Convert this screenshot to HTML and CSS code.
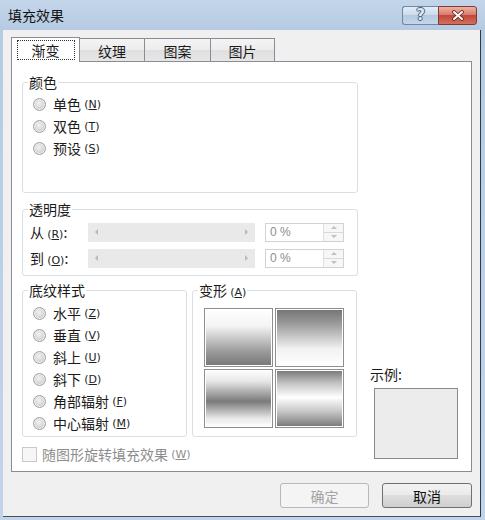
FILE: index.html
```html
<!DOCTYPE html>
<html lang="zh-CN">

<head>
    <meta charset="UTF-8">
    <meta name="viewport" content="width=device-width, initial-scale=1.0">
    <title>填充效果</title>
    <link rel="stylesheet" href="styles.css">
</head>

<body>
    <div class="window">
        <div class="titlebar">
            <span class="title">填充效果</span>
            <div class="caption-btns">
                <span class="cap help">?</span>
                <span class="cap close">
                    <svg width="14" height="11" viewBox="0 0 14 11">
                        <path d="M3 2 L11 9 M11 2 L3 9" stroke="#5a2620" stroke-width="3.6" stroke-linecap="round"/>
                        <path d="M3 2 L11 9 M11 2 L3 9" stroke="#fff" stroke-width="2" stroke-linecap="round"/>
                    </svg>
                </span>
            </div>
        </div>

        <div class="client">
            <div class="tabs">
                <div class="tab active"><span class="focus">渐变</span></div>
                <div class="tab t2">纹理</div>
                <div class="tab t3">图案</div>
                <div class="tab t4">图片</div>
            </div>

            <div class="panel">
                <fieldset class="group color">
                    <legend>颜色</legend>
                    <div class="rlist">
                        <div class="radio"><span class="dot"></span>单色 <span class="key">(<u>N</u>)</span></div>
                        <div class="radio"><span class="dot"></span>双色 <span class="key">(<u>T</u>)</span></div>
                        <div class="radio"><span class="dot"></span>预设 <span class="key">(<u>S</u>)</span></div>
                    </div>
                </fieldset>

                <fieldset class="group alpha">
                    <legend>透明度</legend>
                    <div class="trow">
                        <span class="tlabel">从 <span class="key">(<u>R</u>)</span>:</span>
                        <div class="slider"><i class="arr left"></i><i class="arr right"></i></div>
                        <div class="spin">
                            <span class="val">0 %</span>
                            <span class="spin-btns"><i class="up"></i><i class="down"></i></span>
                        </div>
                    </div>
                    <div class="trow">
                        <span class="tlabel">到 <span class="key">(<u>O</u>)</span>:</span>
                        <div class="slider"><i class="arr left"></i><i class="arr right"></i></div>
                        <div class="spin">
                            <span class="val">0 %</span>
                            <span class="spin-btns"><i class="up"></i><i class="down"></i></span>
                        </div>
                    </div>
                </fieldset>

                <div class="lower">
                    <div class="lower-left">
                        <div class="groups">
                            <fieldset class="group shading">
                                <legend>底纹样式</legend>
                                <div class="rlist">
                                    <div class="radio"><span class="dot"></span>水平 <span class="key">(<u>Z</u>)</span></div>
                                    <div class="radio"><span class="dot"></span>垂直 <span class="key">(<u>V</u>)</span></div>
                                    <div class="radio"><span class="dot"></span>斜上 <span class="key">(<u>U</u>)</span></div>
                                    <div class="radio"><span class="dot"></span>斜下 <span class="key">(<u>D</u>)</span></div>
                                    <div class="radio"><span class="dot"></span>角部辐射 <span class="key">(<u>F</u>)</span></div>
                                    <div class="radio"><span class="dot"></span>中心辐射 <span class="key">(<u>M</u>)</span></div>
                                </div>
                            </fieldset>
                            <fieldset class="group variants">
                                <legend>变形 <span class="key">(<u>A</u>)</span></legend>
                                <div class="vgrid">
                                    <div class="cell v1"></div>
                                    <div class="cell v2"></div>
                                    <div class="cell v3"></div>
                                    <div class="cell v4"></div>
                                </div>
                            </fieldset>
                        </div>
                        <div class="check"><span class="box"></span>随图形旋转填充效果 <span class="key">(<u>W</u>)</span></div>
                    </div>
                    <div class="sample">
                        <div class="sample-label">示例:</div>
                        <div class="sample-box"></div>
                    </div>
                </div>
            </div>

            <div class="buttons">
                <button disabled>确定</button>
                <button>取消</button>
            </div>
        </div>
    </div>
</body>

</html>
```

FILE: styles.css
```css
body {
    margin: 0;
    font-family: "Noto Sans CJK SC", sans-serif;
    font-size: 14px;
    color: #1a1a1a;
}

.window {
    width: 485px;
    height: 520px;
    display: flex;
    flex-direction: column;
    background: linear-gradient(#c3d5e9, #b6cbe2 30px, #c2d4e8);
}

/* title bar */
.titlebar {
    height: 30px;
    flex: none;
    display: flex;
    align-items: center;
    padding: 0 8px;
}

.title {
    flex: 1;
    line-height: 16px;
    color: #141414;
}

.caption-btns {
    display: flex;
    align-self: flex-start;
    margin-top: 6px;
}

.cap {
    height: 19px;
    box-sizing: border-box;
    display: flex;
    align-items: center;
    justify-content: center;
}

.help {
    width: 36px;
    border: 1px solid #7088a6;
    border-right: none;
    border-radius: 3px 0 0 3px;
    background: linear-gradient(#e4edf7, #cddbec 45%, #b4c8df 50%, #c5d7ea);
    color: #dfe7f1;
    font: bold 15px/17px "DejaVu Sans", sans-serif;
    text-shadow: 1px 0 0 #4a6280, -1px 0 0 #4a6280, 0 1px 0 #4a6280, 0 -1px 0 #4a6280;
}

.close {
    width: 39px;
    border: 1px solid #7e3c33;
    border-radius: 0 3px 3px 0;
    background: linear-gradient(#ebb2a4, #d97d6d 45%, #c4463a 50%, #d2705c);
}

/* client area */
.client {
    flex: 1;
    margin: 0 4px 3px 3px;
    background: #f0f0f0;
    border-right: 1px solid #2e3a46;
    border-bottom: 1px solid #3f5164;
    padding: 8px 8px 0 8px;
    display: flex;
    flex-direction: column;
}

.tabs {
    display: flex;
    align-items: flex-end;
    height: 23px;
    position: relative;
    z-index: 1;
}

.tab {
    height: 23px;
    box-sizing: border-box;
    border: 1px solid #898c95;
    border-bottom: none;
    margin-left: -1px;
    background: linear-gradient(#f4f4f4, #ececec 50%, #dfdfdf 50%, #e6e6e6);
    display: flex;
    align-items: center;
    justify-content: center;
    line-height: 16px;
    padding-top: 2px;
}

.tab.active {
    margin-left: 0;
    width: 69px;
    height: 25px;
    margin-bottom: -1px;
    background: #fff;
    padding-top: 0;
}

.t2 { width: 66px; }
.t3 { width: 67px; }
.t4 { width: 65px; }

.focus {
    border: 1px dotted #333;
    padding: 1px 14px;
}

.panel {
    height: 411px;
    box-sizing: border-box;
    border: 1px solid #898c95;
    background: #fff;
    padding: 12px 0 0 10px;
}

/* group boxes */
.group {
    margin: 0;
    padding: 0;
    border: 1px solid #d8e0e6;
    border-radius: 3px;
    min-width: 0;
    box-sizing: border-box;
}

.group legend {
    padding: 0 1px;
    margin-left: 5px;
    line-height: 16px;
}

.key {
    font: 11px "DejaVu Sans", sans-serif;
    color: #222;
}

.color {
    width: 336px;
    height: 119px;
}

.rlist {
    padding: 3px 0 0 10px;
}

.radio {
    height: 22px;
    display: flex;
    align-items: center;
    line-height: 16px;
    white-space: pre;
}

.dot {
    width: 13px;
    height: 13px;
    box-sizing: border-box;
    border-radius: 50%;
    border: 1px solid #a2a2a2;
    background: radial-gradient(circle at 45% 40%, #f2f2f2, #d6d6d6 55%, #c2c2c2);
    box-shadow: inset 0 0 0 1px #ececec;
    margin-right: 7px;
}

.alpha {
    width: 336px;
    height: 75px;
    margin-top: 8px;
}

.trow {
    display: flex;
    align-items: center;
    height: 20px;
    margin: 5px 0 0 7px;
    line-height: 16px;
}

.trow + .trow {
    margin-top: 6px;
}

.tlabel {
    width: 58px;
    white-space: pre;
}

.slider {
    width: 167px;
    height: 19px;
    box-sizing: border-box;
    background: #e9e9e9;
    display: flex;
    justify-content: space-between;
    align-items: center;
    padding: 0 7px;
    margin-right: 10px;
}

.arr {
    width: 0;
    height: 0;
    border-top: 3px solid transparent;
    border-bottom: 3px solid transparent;
}

.arr.left { border-right: 3px solid #b9b9b9; }
.arr.right { border-left: 3px solid #b9b9b9; }

.spin {
    width: 79px;
    height: 19px;
    box-sizing: border-box;
    border: 1px solid #d2d2d2;
    display: flex;
}

.val {
    flex: 1;
    padding-left: 4px;
    color: #8c8c8c;
    font: 12px/17px "Liberation Sans", sans-serif;
}

.spin-btns {
    width: 19px;
    display: flex;
    flex-direction: column;
    border-left: 1px solid #e0e0e0;
    background: #f7f7f7;
}

.spin-btns i {
    flex: 1;
    display: flex;
    align-items: center;
    justify-content: center;
}

.spin-btns .up { border-bottom: 1px solid #d9d9d9; }

.spin-btns i::before {
    content: "";
    border-left: 3px solid transparent;
    border-right: 3px solid transparent;
}

.spin-btns .up::before { border-bottom: 3px solid #c0c0c0; }
.spin-btns .down::before { border-top: 3px solid #c0c0c0; }

/* lower part */
.lower {
    display: flex;
    margin-top: 6px;
}

.groups {
    display: flex;
    gap: 5px;
}

.shading,
.variants {
    width: 165px;
    height: 155px;
}

.shading .rlist {
    padding-top: 4px;
}

.vgrid {
    display: grid;
    grid-template-columns: 69px 69px;
    grid-template-rows: 59px 59px;
    gap: 2px;
    margin: 9px 0 0 11px;
}

.cell {
    box-sizing: border-box;
    border: 1px solid #8e8e8e;
    box-shadow: inset 0 0 0 1px #fff;
}

.v1 { background: linear-gradient(#fff, #f4f4f4 30%, #9a9a9a 75%, #767676); }
.v2 { background: linear-gradient(#737373, #999 25%, #f2f2f2 70%, #fff); }
.v3 { background: linear-gradient(#fff, #e6e6e6 20%, #7a7a7a 55%, #e8e8e8 85%, #fff); }
.v4 { background: linear-gradient(#777, #c8c8c8 25%, #fff 48%, #c8c8c8 72%, #777); }

.check {
    display: flex;
    align-items: center;
    height: 16px;
    margin-top: 9px;
    color: #8d8d8d;
    line-height: 16px;
    white-space: pre;
}

.check .key {
    color: #8d8d8d;
}

.check .box {
    width: 15px;
    height: 15px;
    box-sizing: border-box;
    border: 1px solid #c9c9c9;
    background: #f6f6f6;
    margin-right: 5px;
}

.sample {
    margin-left: 13px;
    padding-top: 84px;
}

.sample-label {
    line-height: 16px;
}

.sample-box {
    width: 84px;
    height: 71px;
    box-sizing: border-box;
    margin: 6px 0 0 4px;
    border: 1px solid #8a8a8a;
    background: #ececec;
}

/* dialog buttons */
.buttons {
    display: flex;
    justify-content: flex-end;
    gap: 13px;
    margin-top: 11px;
}

button {
    width: 90px;
    height: 25px;
    padding: 0;
    font: 14px/16px "Noto Sans CJK SC", sans-serif;
    color: #111;
    border: 1px solid #707070;
    border-radius: 3px;
    background: linear-gradient(#f2f2f2, #ebebeb 50%, #dddddd 50%, #cfcfcf);
}

button:disabled {
    width: 89px;
    border-color: #b5b9bc;
    background: #f4f4f4;
    color: #a3a3a3;
}
```
